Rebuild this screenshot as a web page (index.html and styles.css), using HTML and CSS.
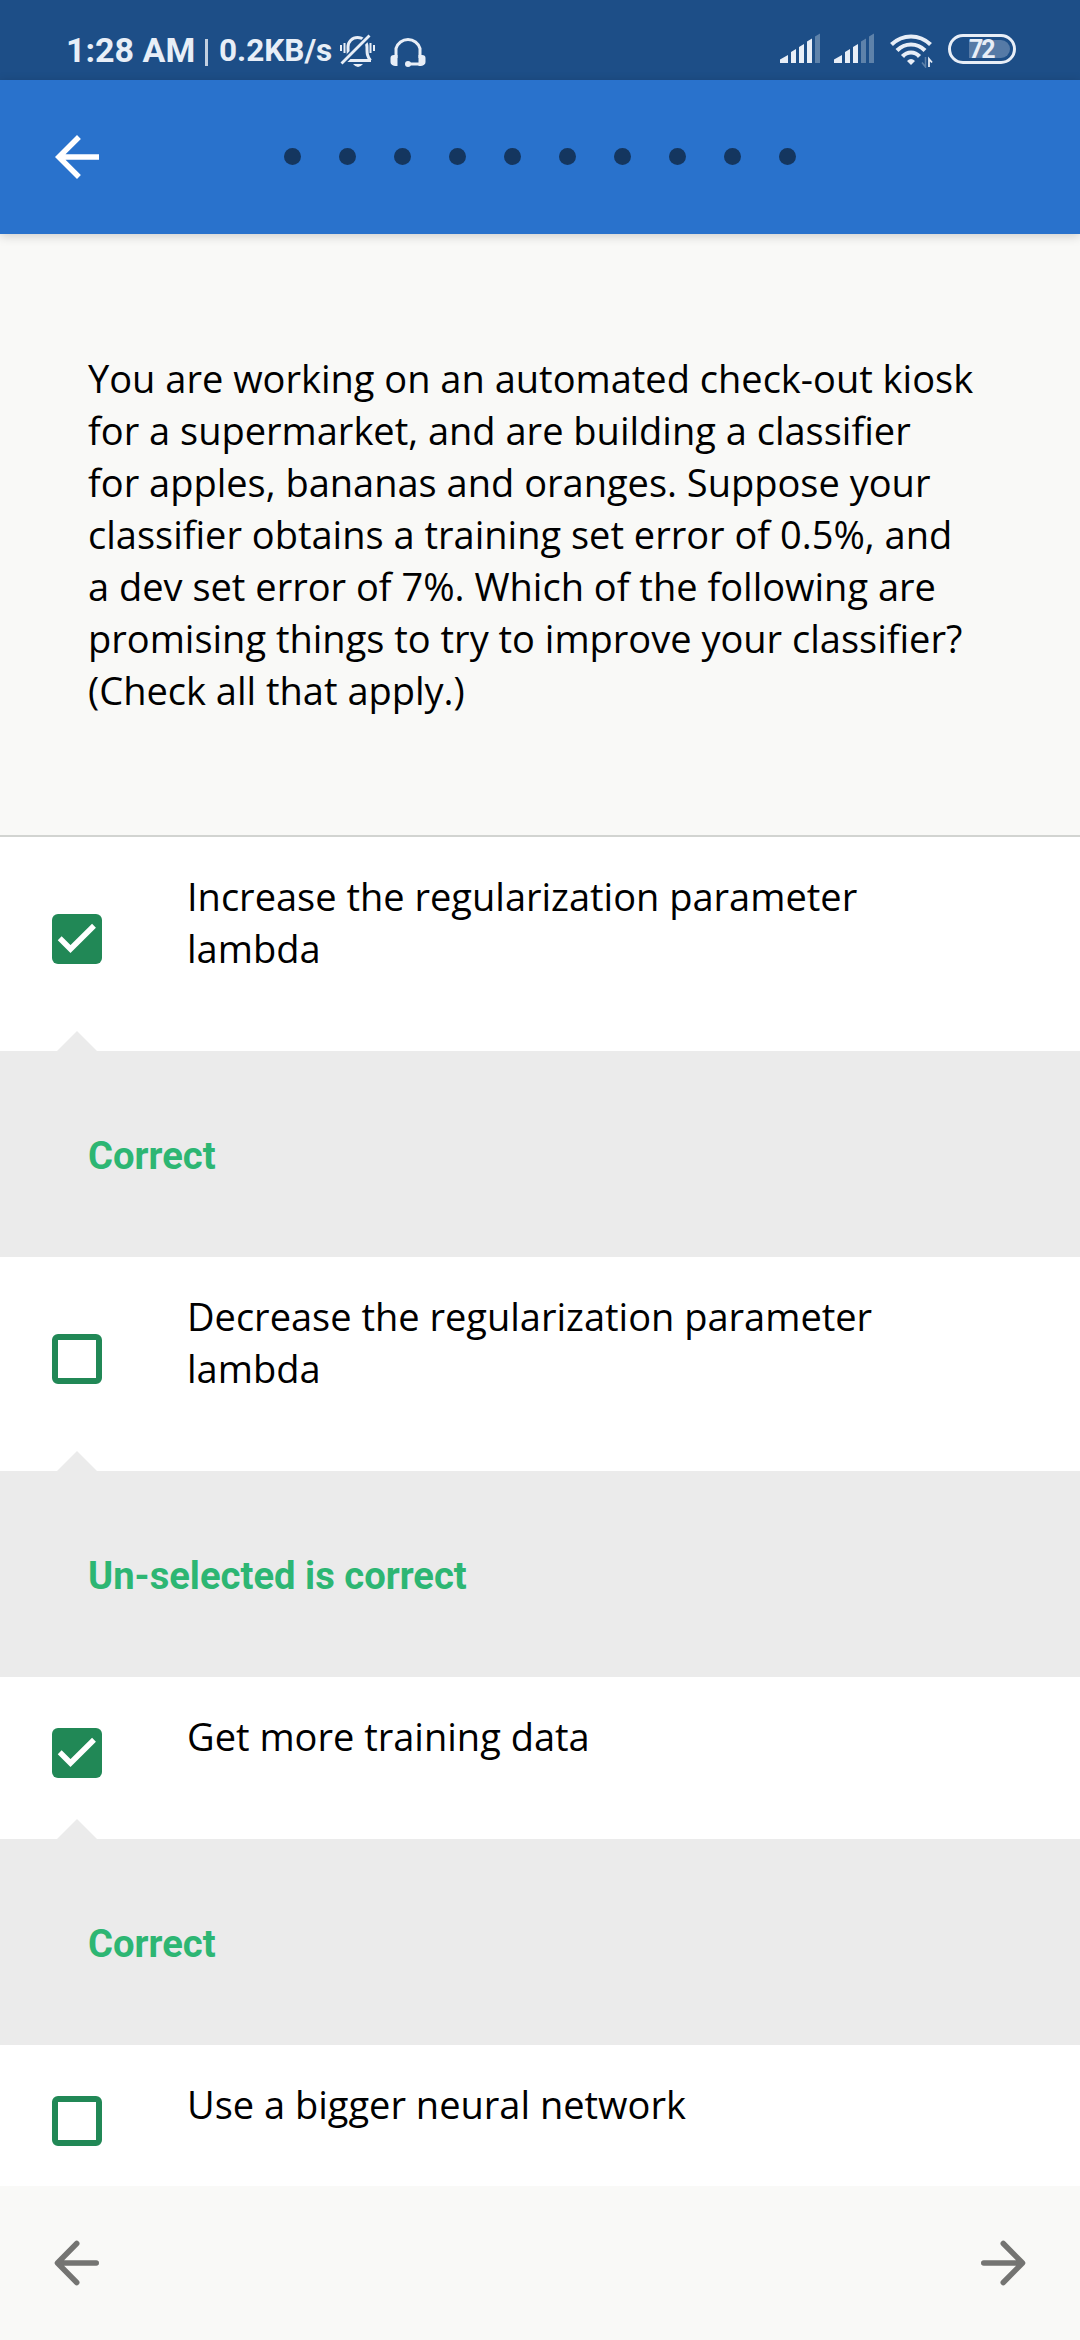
FILE: index.html
```html
<!DOCTYPE html>
<html lang="en">
<head>
<meta charset="utf-8">
<title>Quiz</title>
<link rel="stylesheet" href="styles.css">
</head>
<body>
<div class="screen">
  <div class="status">
    <span class="clock">1:28 AM</span>
    <span class="divider"></span>
    <span class="speed">0.2KB/s</span>
    <svg class="bell" width="36" height="34" viewBox="0 0 36 34" fill="none" stroke="#e8eef7">
      <path d="M4 26.500H31M7.500 26.500C9 23 8 20 8 13A9.500 9.500 0 0 1 27 13C27 20 27 22 30.500 26.500" stroke-width="3"/>
      <path d="M2.500 28.500L29.500 2" stroke="#1d4e87" stroke-width="6"/>
      <path d="M1.500 29.500L29.500 1.500" stroke-width="2.800"/>
      <path d="M1 11v6M4.500 9v10M30.500 9v10M34 11v6" stroke-width="2"/>
      <path d="M13 30H23Q18 36 13 30Z" fill="#e8eef7" stroke="none"/>
    </svg>
    <svg class="headset" width="36" height="34" viewBox="0 0 36 34" fill="none" stroke="#e8eef7" stroke-width="3">
      <path d="M6 24V14.500A12.500 12.500 0 0 1 30 14.500V24M18 30H30"/>
      <path d="M4 21H7.500V32H5Q.5 31 .5 28V24Q.5 21 4 21ZM32 21H28.500V32H31Q35.500 31 35.500 28V24Q35.500 21 32 21Z" fill="#e8eef7" stroke="none"/>
      <circle cx="18" cy="30" r="3" fill="#e8eef7" stroke="none"/>
    </svg>
    <span class="spacer"></span>
    <svg class="signal" width="40" height="30" viewBox="0 0 40 30" fill="#e8eef7">
      <path d="M0 30V26.500L8 22V30ZM11 30V19L16 16V30ZM19 30V14L24 11V30ZM27 30V8.500L32 5.500V30Z"/>
      <path d="M35 30V3.500L40 .5V30Z" opacity=".32"/>
    </svg>
    <svg class="signal" width="40" height="30" viewBox="0 0 40 30" fill="#e8eef7">
      <path d="M0 30V26.500L8 22V30ZM11 30V19L16 16V30ZM19 30V14L24 11V30Z"/>
      <path d="M27 30V8.500L32 5.500V30ZM35 30V3.500L40 .5V30Z" opacity=".32"/>
    </svg>
    <svg class="wifi" width="43" height="34" viewBox="0 0 43 34" fill="none" stroke="#e8eef7">
      <path d="M1.500 10.500Q10 2.500 21 2.500Q32 2.500 40.500 10.500M7 16.500Q13 10.500 21 10.500Q29 10.500 35 16.500M12.500 22.500Q16 18.500 21 18.500Q26 18.500 29.500 22.500" stroke-width="4.200"/>
      <path d="M17 27Q21 23 25 27L21 31Z" fill="#e8eef7" stroke="none"/>
      <path d="M35.500 23V33L32 28.500" stroke-width="1.500" opacity=".32"/>
      <path d="M39 33V25L42 28.500" stroke-width="1.800"/>
    </svg>
    <span class="battery"><span class="level">72</span></span>
  </div>
  <div class="header">
    <svg class="icon" width="66" height="66" viewBox="0 0 24 24" fill="#fff"><path d="M20 11H7.830l5.590-5.590L12 4l-8 8 8 8 1.410-1.410L7.830 13H20v-2z"/></svg>
    <div class="dots"><i></i><i></i><i></i><i></i><i></i><i></i><i></i><i></i><i></i><i></i></div>
  </div>
  <div class="question">You are working on an automated check-out kiosk<br>for a supermarket, and are building a classifier<br>for apples, bananas and oranges. Suppose your<br>classifier obtains a training set error of 0.5%, and<br>a dev set error of 7%. Which of the following are<br>promising things to try to improve your classifier?<br>(Check all that apply.)</div>
  <div class="options">
    <div class="option">
      <span class="box checked"><svg width="50" height="50" viewBox="0 0 50 50"><path d="M7.700 24.200L18.500 35L42 11.700" fill="none" stroke="#fff" stroke-width="5.500"/></svg></span>
      <p>Increase the regularization parameter<br>lambda</p>
    </div>
    <div class="feedback">Correct</div>
    <div class="option">
      <span class="box"></span>
      <p>Decrease the regularization parameter<br>lambda</p>
    </div>
    <div class="feedback">Un-selected is correct</div>
    <div class="option">
      <span class="box checked"><svg width="50" height="50" viewBox="0 0 50 50"><path d="M7.700 24.200L18.500 35L42 11.700" fill="none" stroke="#fff" stroke-width="5.500"/></svg></span>
      <p>Get more training data</p>
    </div>
    <div class="feedback">Correct</div>
    <div class="option">
      <span class="box"></span>
      <p>Use a bigger neural network</p>
    </div>
  </div>
  <div class="footer">
    <svg class="icon" width="66" height="66" viewBox="0 0 24 24"><path d="M19 12H5.200M11.900 4.900L4.900 12L11.900 19.100"/></svg>
    <svg class="icon" width="66" height="66" viewBox="0 0 24 24"><path d="M5 12H18.800M12.100 4.900L19.100 12L12.100 19.100"/></svg>
  </div>
</div>
</body>
</html>
```
FILE: styles.css
```css
* { box-sizing: border-box; }
body { margin: 0; }
.screen {
  display: flex;
  flex-direction: column;
  width: 1080px;
  height: 2340px;
  overflow: hidden;
  background: #f9f9f7;
  color: #000;
  font: 38px/52px "Open Sans", "Noto Sans", sans-serif;
}
.status {
  display: flex;
  align-items: flex-start;
  flex: 0 0 80px;
  padding: 30px 64px 0 66px;
  background: #1d4e87;
  color: #e8eef7;
  font-family: Roboto, sans-serif;
  font-weight: 700;
}
.clock { width: 139px; font-size: 34px; line-height: 40px; white-space: nowrap; }
.divider { width: 3px; height: 27px; margin: 9px 11px 0 0; background: #c3d0e1; }
.speed { width: 121px; font-size: 31.5px; line-height: 42px; white-space: nowrap; }
.bell { margin-top: 4px; }
.headset { margin: 4px 0 0 14px; }
.spacer { flex: 1; }
.signal { margin: 3px 14px 0 0; }
.wifi { margin: 4px 14px 0 2px; }
.battery {
  width: 68px;
  height: 30px;
  margin: 4px 0 0 1px;
  padding: 3px;
  border: 3px solid #e8eef7;
  border-radius: 15px;
}
.level {
  display: block;
  width: 41px;
  height: 18px;
  margin-left: 15px;
  border-radius: 0 9px 9px 0;
  background: #567aa6;
  font-size: 25px;
  line-height: 19px;
  letter-spacing: -2px;
}
.header {
  display: grid;
  grid-template-columns: 66px 1fr 66px;
  align-items: center;
  flex: 0 0 154px;
  padding: 0 44px;
  background: #2972cc;
  box-shadow: 0 2px 10px rgba(0, 0, 0, .18);
}
.icon { display: block; }
.dots { display: flex; justify-content: center; gap: 38px; margin-bottom: 1px; }
.dots i { width: 17px; height: 17px; border-radius: 50%; background: #14365f; }
.question {
  flex: 0 0 603px;
  padding: 118px 88px 0;
  border-bottom: 2px solid #d2d4d1;
  white-space: nowrap;
}
.options { flex: 0 0 1349px; overflow: hidden; background: #fff; }
.option {
  display: flex;
  align-items: center;
  gap: 85px;
  padding: 0 52px 10px;
}
.option p { margin: 0; padding: 33px 0 67px; white-space: nowrap; }
.box {
  flex: none;
  width: 50px;
  height: 50px;
  border: 6px solid #218856;
  border-radius: 6px;
}
.box.checked { border: 0; background: #218856; }
.box svg { display: block; }
.feedback {
  position: relative;
  height: 206px;
  padding: 79px 88px 0;
  background: #ebebeb;
  color: #2db673;
  font-family: Roboto, sans-serif;
  font-size: 38.200px;
  font-weight: 700;
}
.feedback::before {
  content: "";
  position: absolute;
  left: 57px;
  top: -20px;
  border: solid transparent;
  border-width: 0 20px 20px;
  border-bottom-color: #ebebeb;
}
.footer {
  display: flex;
  align-items: center;
  justify-content: space-between;
  flex: 0 0 154px;
  padding: 0 44px;
  fill: none;
  stroke: #747472;
  stroke-width: 2;
  stroke-linecap: round;
  stroke-linejoin: round;
}
```
